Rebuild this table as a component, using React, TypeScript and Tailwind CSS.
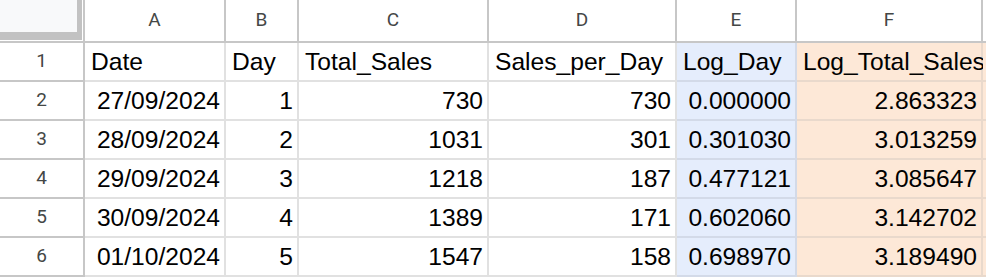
import React from 'react';

type Col = {
  letter: string;
  width: string;
  bg: string;
  line: string;
};

const cols: Col[] = [
  { letter: 'A', width: 'w-[141px]', bg: 'bg-white', line: 'border-[#e1e1e1]' },
  { letter: 'B', width: 'w-[73px]', bg: 'bg-white', line: 'border-[#e1e1e1]' },
  { letter: 'C', width: 'w-[190px]', bg: 'bg-white', line: 'border-[#e1e1e1]' },
  { letter: 'D', width: 'w-[188px]', bg: 'bg-white', line: 'border-[#e1e1e1]' },
  { letter: 'E', width: 'w-[120px]', bg: 'bg-[#e5edfc]', line: 'border-[#d3dae8]' },
  { letter: 'F', width: 'w-[186px]', bg: 'bg-[#fde8d7]', line: 'border-[#e9d9cc]' },
];

const header = ['Date', 'Day', 'Total_Sales', 'Sales_per_Day', 'Log_Day', 'Log_Total_Sales'];

const rows = [
  ['27/09/2024', '1', '730', '730', '0.000000', '2.863323'],
  ['28/09/2024', '2', '1031', '301', '0.301030', '3.013259'],
  ['29/09/2024', '3', '1218', '187', '0.477121', '3.085647'],
  ['30/09/2024', '4', '1389', '171', '0.602060', '3.142702'],
  ['01/10/2024', '5', '1547', '158', '0.698970', '3.189490'],
];

const cellFont = { fontFamily: '"Liberation Sans", Arial, sans-serif' };
const uiFont = { fontFamily: 'Roboto, "Liberation Sans", Arial, sans-serif' };

function RowNumber({ n }: { n: number }) {
  return (
    <div
      className="flex w-[85px] shrink-0 items-center justify-center border-r-2 border-b-2 border-[#c7c7c7] bg-white text-[19px] text-[#444746]"
      style={uiFont}
    >
      {n}
    </div>
  );
}

function Cell({ col, text, right }: { col: Col; text: string; right?: boolean }) {
  return (
    <div
      className={`flex shrink-0 items-end whitespace-nowrap border-r-2 border-b-2 pb-[4px] pl-[6px] pr-[4px] text-[24.6px] leading-[28px] text-black ${col.width} ${col.bg} ${col.line} ${
        right ? 'justify-end' : 'justify-start'
      }`}
      style={cellFont}
    >
      {text}
    </div>
  );
}

export default function App() {
  return (
    <div className="h-[277px] w-[986px] overflow-hidden bg-white">
      {/* column letters */}
      <div className="flex h-[43px]">
        <div className="w-[85px] shrink-0 border-r-2 border-b-2 border-[#c7c7c7] bg-white">
          <div className="h-[40px] w-[82px] bg-[#c2c2c2]">
            <div className="h-[32px] w-[77px] bg-[#f8f9fa]" />
          </div>
        </div>
        {cols.map((c) => (
          <div
            key={c.letter}
            className={`flex shrink-0 items-center justify-center border-r-2 border-b-2 border-[#c7c7c7] bg-white text-[19px] text-[#444746] ${c.width}`}
            style={uiFont}
          >
            {c.letter}
          </div>
        ))}
        <div className="flex-1 border-b-2 border-[#c7c7c7] bg-white" />
      </div>

      {/* row 1: titles */}
      <div className="flex h-[39px]">
        <RowNumber n={1} />
        {cols.map((c, i) => (
          <Cell key={c.letter} col={c} text={header[i]} />
        ))}
        <div className="flex-1 border-b-2 border-[#e9d9cc] bg-[#fde8d7]" />
      </div>

      {rows.map((r, ri) => (
        <div key={ri} className="flex h-[39px]">
          <RowNumber n={ri + 2} />
          {cols.map((c, i) => (
            <Cell key={c.letter} col={c} text={r[i]} right />
          ))}
          <div className="flex-1 border-b-2 border-[#e9d9cc] bg-[#fde8d7]" />
        </div>
      ))}
    </div>
  );
}
